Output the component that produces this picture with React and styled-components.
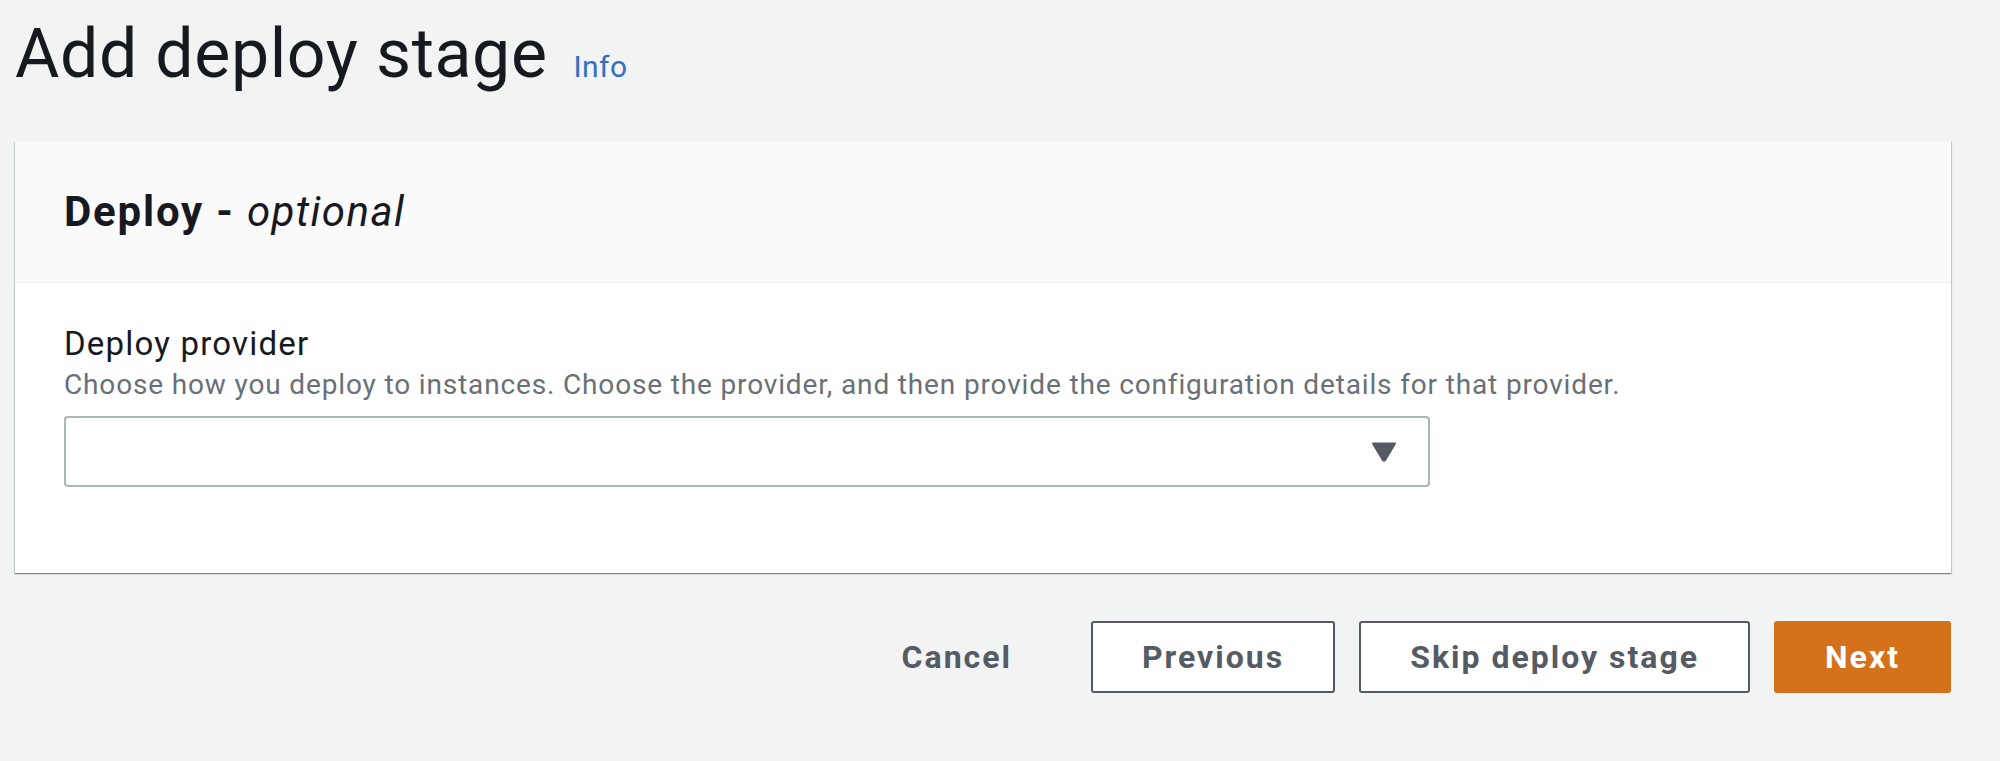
import React from "react";
import styled, { createGlobalStyle } from "styled-components";

const Global = createGlobalStyle`
  html, body { margin: 0; padding: 0; background: #f2f3f3; }
  body { font-family: Roboto, "Open Sans", Arial, sans-serif; color: #16191f; }
  * { box-sizing: border-box; }
`;

const Page = styled.div`
  padding: 0 49px 0 15px;
  width: 2000px;
`;

const TitleRow = styled.div`
  display: flex;
  align-items: baseline;
  gap: 26px;
  height: 110px;
  padding-top: 14px;
`;

const Title = styled.h1`
  margin: 0;
  font-size: 68px;
  font-weight: 400;
  letter-spacing: 0.6px;
  line-height: 80px;
  color: #16191f;
`;

const InfoLink = styled.a`
  font-size: 30px;
  letter-spacing: 0.4px;
  color: #3370c2;
  text-decoration: none;
`;

const Card = styled.section`
  margin-top: 31px;
  background: #fff;
  box-shadow: 0 1px 1px 0 rgba(0, 28, 36, 0.3), 1px 1px 1px 0 rgba(0, 28, 36, 0.15),
    -1px 1px 1px 0 rgba(0, 28, 36, 0.15);
`;

const CardHeader = styled.header`
  height: 142px;
  background: #fafafa;
  border-bottom: 1px solid #eaeded;
  display: flex;
  align-items: center;
  padding: 0 49px;
`;

const CardTitle = styled.h2`
  margin: 0;
  font-size: 42px;
  font-weight: 700;
  letter-spacing: 1.8px;
  em { font-weight: 400; font-style: italic; letter-spacing: 1.4px; }
`;

const CardBody = styled.div`
  padding: 39px 49px 86px;
`;

const Label = styled.label`
  display: block;
  font-size: 33px;
  letter-spacing: 1.2px;
  line-height: 44px;
  color: #16191f;
`;

const Description = styled.p`
  margin: 0 0 12px;
  font-size: 28px;
  letter-spacing: 0.85px;
  line-height: 38px;
  color: #687078;
`;

const Select = styled.div`
  width: 1366px;
  height: 71px;
  border: 2px solid #aab7b8;
  border-radius: 4px;
  display: flex;
  align-items: center;
  justify-content: flex-end;
  padding-right: 31px;
`;

const Actions = styled.div`
  display: flex;
  justify-content: flex-end;
  align-items: center;
  gap: 24px;
  margin-top: 48px;
`;

const Button = styled.button`
  height: 72px;
  padding: 0 ${(p) => p.$pad}px;
  font-family: inherit;
  font-size: 32px;
  font-weight: 700;
  letter-spacing: 2px;
  border-radius: 3px;
  cursor: pointer;
  border: 2px solid ${(p) => (p.$variant === "primary" ? "#d4711a" : p.$variant === "link" ? "transparent" : "#545b64")};
  background: ${(p) => (p.$variant === "primary" ? "#d4711a" : p.$variant === "link" ? "transparent" : "#fff")};
  color: ${(p) => (p.$variant === "primary" ? "#fff" : "#545b64")};
  margin-right: ${(p) => p.$mr || 0}px;
`;

const Caret = () => (
  <svg width="26" height="20" viewBox="0 0 26 20">
    <path d="M2 1.5 H24 L14.2 18 Q13 19.6 11.8 18 Z" fill="#545b64" stroke="#545b64" strokeWidth="2" strokeLinejoin="round" />
  </svg>
);

export default function App() {
  return (
    <Page>
      <Global />
      <TitleRow>
        <Title>Add deploy stage</Title>
        <InfoLink href="#">Info</InfoLink>
      </TitleRow>
      <Card>
        <CardHeader>
          <CardTitle>
            Deploy - <em>optional</em>
          </CardTitle>
        </CardHeader>
        <CardBody>
          <Label>Deploy provider</Label>
          <Description>
            Choose how you deploy to instances. Choose the provider, and then provide the configuration details for that provider.
          </Description>
          <Select>
            <Caret />
          </Select>
        </CardBody>
      </Card>
      <Actions>
        <Button $variant="link" $pad={0} $mr={53}>Cancel</Button>
        <Button $pad={49}>Previous</Button>
        <Button $pad={49}>Skip deploy stage</Button>
        <Button $variant="primary" $pad={49}>Next</Button>
      </Actions>
    </Page>
  );
}
